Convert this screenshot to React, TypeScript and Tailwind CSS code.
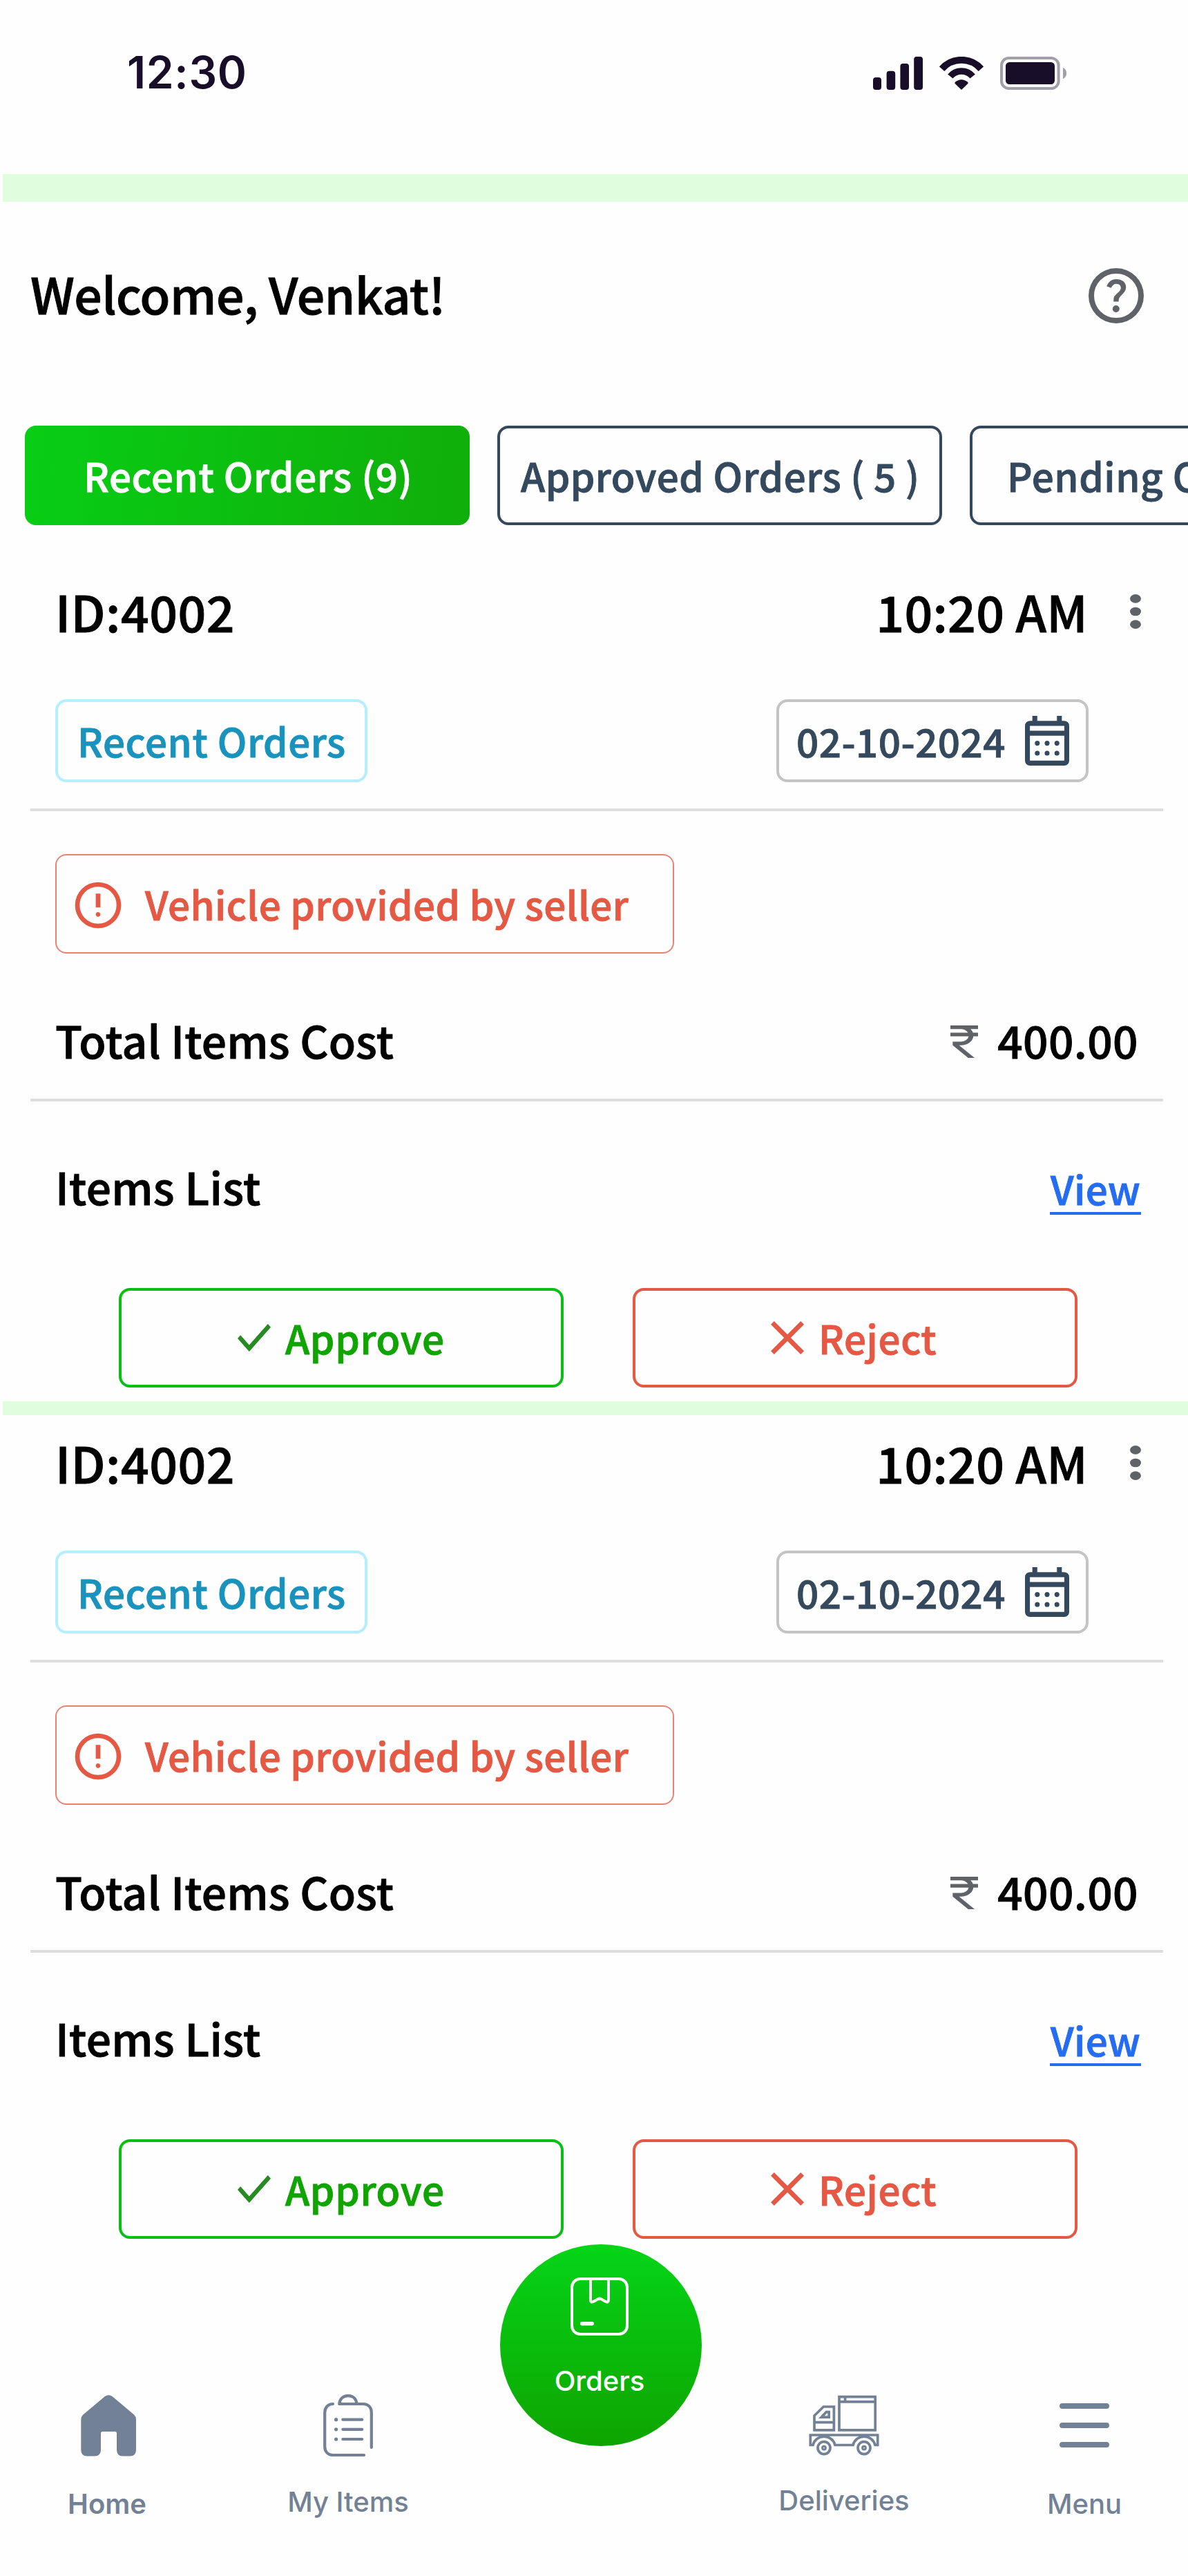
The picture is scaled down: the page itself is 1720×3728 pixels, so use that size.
import type { ReactNode } from "react";

function SignalIcon() {
  return (
    <svg width="72" height="48" viewBox="0 0 72 48" fill="#180e29">
      <rect x="0" y="30" width="12" height="18" rx="4" />
      <rect x="19.6" y="20.8" width="12.6" height="27.2" rx="4" />
      <rect x="39.4" y="10" width="12.6" height="38" rx="4" />
      <rect x="59.2" y="0" width="12.8" height="48" rx="4" />
    </svg>
  );
}

function WifiIcon() {
  return (
    <svg width="64" height="48" viewBox="0 0 64 48" fill="none" stroke="#180e29">
      <path d="M3.6 17.7A37.6 37.6 0 0 1 60.4 17.7" strokeWidth="9.8" />
      <path d="M15.8 28.5A21.3 21.3 0 0 1 48.2 28.5" strokeWidth="9.6" />
      <path
        d="M32 48 22.9 39.2Q21.6 38 22.9 36.8 27 33.2 32 33.2T41.1 36.8Q42.4 38 41.1 39.2Z"
        fill="#180e29"
        stroke="none"
      />
    </svg>
  );
}

function BatteryIcon() {
  return (
    <svg width="96" height="48" viewBox="0 0 96 48" fill="none">
      <rect x="2" y="2" width="82.6" height="44" rx="10.5" stroke="#a29faa" strokeWidth="4" />
      <rect x="8" y="8" width="71" height="32" rx="5.5" fill="#180e29" />
      <path d="M91 15.8q5.2 3.2 5.2 8.2t-5.2 8.2z" fill="#a29faa" />
    </svg>
  );
}

function HelpIcon() {
  return (
    <svg width="96" height="96" viewBox="0 -960 960 960" fill="#5f6368">
      <path d="M478-240q21 0 35.5-14.5T528-290q0-21-14.5-35.5T478-340q-21 0-35.5 14.5T428-290q0 21 14.5 35.5T478-240Zm-36-154h74q0-33 7.5-52t42.5-52q26-26 41-49.5t15-56.5q0-56-41-86t-97-30q-57 0-92.5 30T342-618l66 26q5-18 22.5-39t53.5-21q32 0 48 17.5t16 38.5q0 20-12 37.5T506-526q-44 39-54 59t-10 73Zm38 314q-83 0-156-31.5T197-197q-54-54-85.5-127T80-480q0-83 31.5-156T197-763q54-54 127-85.5T480-880q83 0 156 31.5T763-763q54 54 85.5 127T880-480q0 83-31.5 156T763-197q-54 54-127 85.5T480-80Zm0-80q134 0 227-93t93-227q0-134-93-227t-227-93q-134 0-227 93t-93 227q0 134 93 227t227 93Z" />
    </svg>
  );
}

function MoreIcon() {
  return (
    <svg width="16" height="50" viewBox="0 0 16 50" fill="#5f6368">
      <ellipse cx="8" cy="6.4" rx="8" ry="6.3" />
      <ellipse cx="8" cy="25" rx="8" ry="6.3" />
      <ellipse cx="8" cy="43.6" rx="8" ry="6.3" />
    </svg>
  );
}

function CalendarIcon() {
  return (
    <svg width="64" height="72" viewBox="120 -880 720 800" preserveAspectRatio="none" fill="#34495e">
      <path d="M200-80q-33 0-56.5-23.5T120-160v-560q0-33 23.5-56.5T200-800h40v-80h80v80h320v-80h80v80h40q33 0 56.5 23.5T840-720v560q0 33-23.5 56.5T760-80H200Zm0-80h560v-400H200v400Zm0-480h560v-80H200v80Z" />
      <circle cx="320" cy="-440" r="40" />
      <circle cx="480" cy="-440" r="40" />
      <circle cx="640" cy="-440" r="40" />
      <circle cx="320" cy="-280" r="40" />
      <circle cx="480" cy="-280" r="40" />
      <circle cx="640" cy="-280" r="40" />
    </svg>
  );
}

function AlertIcon() {
  return (
    <svg width="80" height="80" viewBox="0 -960 960 960" fill="#e55844" className="shrink-0">
      <path d="M480-280q17 0 28.5-11.5T520-320q0-17-11.5-28.5T480-360q-17 0-28.5 11.5T440-320q0 17 11.5 28.5T480-280Zm-40-160h80v-240h-80v240Zm40 360q-83 0-156-31.5T197-197q-54-54-85.5-127T80-480q0-83 31.5-156T197-763q54-54 127-85.5T480-880q83 0 156 31.5T763-763q54 54 85.5 127T880-480q0 83-31.5 156T763-197q-54 54-127 85.5T480-80Zm0-80q134 0 227-93t93-227q0-134-93-227t-227-93q-134 0-227 93t-93 227q0 134 93 227t227 93Z" />
    </svg>
  );
}

function RupeeIcon() {
  return (
    <svg width="40" height="47" viewBox="240 -840 480 720" preserveAspectRatio="none" fill="#5f6368">
      <path d="M549-120 280-400v-80h140q53 0 91.5-34.5T558-600H240v-80h306q-17-35-50.5-57.5T420-760H240v-80h480v80H590q14 17 25 37t17 43h88v80h-81q-8 85-70 142.5T420-400h-29l269 280H549Z" />
    </svg>
  );
}

function CheckIcon() {
  return (
    <svg width="48" height="40" viewBox="154 -721 652 481" preserveAspectRatio="none" fill="#268b22">
      <path d="M382-240 154-468l57-57 171 171 367-367 57 57-424 424Z" />
    </svg>
  );
}

function CrossIcon() {
  return (
    <svg width="48" height="48" viewBox="200 -760 560 560" fill="#e55844">
      <path d="m256-200-56-56 224-224-224-224 56-56 224 224 224-224 56 56-224 224 224 224-56 56-224-224-224 224Z" />
    </svg>
  );
}

function HomeIcon() {
  return (
    <svg width="80" height="89" viewBox="0 0 80 89" fill="#728195">
      <path d="M34.6 2.2Q40.2-1.8 45.8 2.2L77 28.6Q80 31.4 80 35.5V79.5Q80 88.5 71.5 88.5H60.5Q52 88.5 52 79.5V55.5Q52 53 49.5 53H31.5Q29 53 29 55.5V79.5Q29 88.5 20 88.5H9Q.3 88.5.3 79.5V35.5Q.3 31.4 3.4 28.6Z" />
    </svg>
  );
}

function ClipboardIcon() {
  return (
    <svg width="72" height="90" viewBox="0 0 72 90" fill="none" stroke="#728195" strokeWidth="4.2" strokeLinecap="round" strokeLinejoin="round">
      <path d="M14 14C7 14 2.2 19 2.2 26.5V76C2.2 83 7 88 13.5 88H59" />
      <path d="M23.4 14H58C65 14 69.8 19 69.8 26V77" />
      <path d="M23.4 14C23.4 7 28.5 2.1 36 2.1S48.4 7 48.4 14" />
      <path d="M28.3 36.7H56.2M28.3 50.8H56.2M28.3 65H56.2" />
      <g fill="#728195" stroke="none">
        <circle cx="18.6" cy="36.7" r="2.6" />
        <circle cx="18.6" cy="50.8" r="2.6" />
        <circle cx="18.6" cy="65" r="2.6" />
      </g>
    </svg>
  );
}

function PackageIcon() {
  return (
    <svg width="84" height="84" viewBox="0 0 84 84" fill="none" stroke="#fff" strokeWidth="4" strokeLinecap="round" strokeLinejoin="round">
      <rect x="2" y="2" width="80" height="80" rx="12" />
      <path d="M29 3V32.5Q29 36.8 33 35L39.3 31.4Q42 29.8 44.7 31.4L51 35Q55 36.8 55 32.5V3" />
      <path d="M16.6 66.8H31.2" strokeWidth="5.4" />
    </svg>
  );
}

function TruckIcon() {
  return (
    <svg width="102" height="88" viewBox="0 0 102 88" fill="none" stroke="#728195" strokeWidth="3.7">
      <path d="M44 2.7H96.2V50.8H44ZM44 9.9H96.2M52.6 2.7V9.9" />
      <path d="M8 50.8V30L21.3 17H36.4V50.8ZM8 39.6H36.4" />
      <path d="M18.2 32.2 25.4 24.7H29.2V32.2Z" />
      <path d="M2.3 72.5V58H99.7V72.5H96A16.5 16.5 0 0 0 64 72.5H38A16.5 16.5 0 0 0 6 72.5Z" />
      <circle cx="22" cy="76.6" r="9" />
      <circle cx="80" cy="76.6" r="9" />
      <circle cx="22" cy="76.6" r="2.4" strokeWidth="3" />
      <circle cx="80" cy="76.6" r="2.4" strokeWidth="3" />
    </svg>
  );
}

function MenuIcon() {
  return (
    <svg width="72" height="64" viewBox="0 0 72 64" stroke="#728195" strokeWidth="8" strokeLinecap="round">
      <path d="M4 4H68M4 32H68M4 60H68" />
    </svg>
  );
}

function Divider() {
  return <div className="ml-[44px] mr-[36px] h-1 bg-[#dedede]" />;
}

function OrderCard() {
  return (
    <section className="flex flex-col pt-4">
      <div className="flex items-start pl-20 pr-[68px] text-[71.5px] leading-[105px] text-black">
        <span className="tracking-[0.5px]">ID:4002</span>
        <span className="ml-auto tracking-[0.3px]">10:20 AM</span>
        <span className="ml-[61px] mt-7">
          <MoreIcon />
        </span>
      </div>

      <div className="mt-[75px] flex justify-between pl-20 pr-36 text-[56.5px] leading-[82px]">
        <div className="h-[120px] w-[452px] rounded-2xl border-4 border-[#b5eeff] pl-7 pt-[14px] tracking-[0.6px] text-[#1992be]">
          Recent Orders
        </div>
        <div className="flex h-[120px] w-[452px] items-start justify-between rounded-2xl border-4 border-[#c4c4c4] pl-[25px] pr-6 text-[#34495e]">
          <span className="mt-[14px] tracking-[0.5px]">02-10-2024</span>
          <span className="mt-5">
            <CalendarIcon />
          </span>
        </div>
      </div>

      <div className="mt-[38px]">
        <Divider />
      </div>

      <div className="ml-20 mt-[62px] flex h-36 w-[896px] items-start rounded-2xl border-2 border-[#eb8172] pl-5 text-[56.5px] leading-[82px] tracking-[0.45px] text-[#e55844]">
        <span className="mt-8">
          <AlertIcon />
        </span>
        <span className="ml-7 mt-7 whitespace-nowrap">Vehicle provided by seller</span>
      </div>

      <div className="mt-[78px] flex items-start pl-20 pr-[72px] text-[64px] leading-[92px] text-black">
        <span className="tracking-[0.2px]">Total Items Cost</span>
        <span className="ml-auto mt-[26px]">
          <RupeeIcon />
        </span>
        <span className="ml-7 tracking-[0.4px]">400.00</span>
      </div>

      <div className="mt-10">
        <Divider />
      </div>

      <div className="mt-[76px] flex items-start justify-between pl-20 pr-[68px] text-[64px] leading-[92px] text-black">
        <span className="tracking-[0.3px]">Items List</span>
        <a className="mt-[14px] w-[132px] border-b-4 border-[#256df0] pl-px text-[56.5px] leading-[70px] tracking-[0.4px] text-[#256df0]">View</a>
      </div>

      <div className="mt-[102px] flex gap-[100px] pl-[172px] text-[56.5px] leading-[82px]">
        <button className="flex h-36 w-[644px] items-start rounded-2xl border-4 border-[#08c012] pl-[168px] tracking-[0.7px] text-[#0fa400]">
          <span className="mt-12">
            <CheckIcon />
          </span>
          <span className="ml-[21px] mt-[26px]">Approve</span>
        </button>
        <button className="flex h-36 w-[644px] items-start rounded-2xl border-4 border-[#e55844] pl-[196px] tracking-[0.6px] text-[#e55844]">
          <span className="mt-11">
            <CrossIcon />
          </span>
          <span className="ml-[21px] mt-[26px]">Reject</span>
        </button>
      </div>
    </section>
  );
}

function NavItem({ className, icon, label }: { className: string; icon: ReactNode; label: ReactNode }) {
  return (
    <div className={`flex flex-col items-center ${className}`}>
      {icon}
      {label}
    </div>
  );
}

export default function App() {
  return (
    <div className="flex h-[3728px] w-[1720px] flex-col overflow-hidden bg-[#fefefe] font-['Noto_Sans_CJK_JP',sans-serif] font-medium [-webkit-text-stroke-width:0.9px] [&_svg]:block">
      <header className="flex h-[252px] shrink-0 items-start justify-between pl-[184px] pr-44">
        <span className="mt-[66px] font-['Inter',sans-serif] text-[64px] font-semibold leading-[77px] tracking-[0.7px] text-[#180e29] [-webkit-text-stroke-width:0]">
          12:30
        </span>
        <div className="mt-[82px] flex gap-6">
          <SignalIcon />
          <WifiIcon />
          <BatteryIcon />
        </div>
      </header>
      <div className="ml-1 h-10 shrink-0 bg-[#e0fdde]" />

      <div className="flex h-[324px] shrink-0 items-start justify-between pl-[44px] pr-14">
        <h1 className="mt-20 text-[71.5px] leading-[105px] tracking-[-0.55px] text-black">Welcome, Venkat!</h1>
        <div className="mt-[88px]">
          <HelpIcon />
        </div>
      </div>

      <nav className="flex shrink-0 gap-10 overflow-hidden pl-9 text-[56.5px] leading-[82px] text-[#34495e]">
        <div className="h-36 w-[644px] shrink-0 whitespace-nowrap rounded-2xl bg-linear-[96deg,#08ce15,#10ae0a] pl-[85px] pt-[30px] tracking-[0.6px] text-white">
          Recent Orders (9)
        </div>
        <div className="h-36 w-[644px] shrink-0 whitespace-nowrap rounded-2xl border-4 border-[#34495e] pl-[30px] pt-[26px] tracking-[0.5px]">
          Approved Orders ( 5 )
        </div>
        <div className="h-36 w-[644px] shrink-0 whitespace-nowrap rounded-2xl border-4 border-[#34495e] pl-[50px] pt-[26px] tracking-[0.6px]">
          Pending Orders ( 2 )
        </div>
      </nav>

      <main className="mt-14 shrink-0">
        <OrderCard />
        <div className="ml-1 mt-5 h-5 bg-[#e0fdde]" />
        <OrderCard />
      </main>

      <footer className="flex shrink-0 items-start font-['Inter',sans-serif] text-[40px] leading-[49px] text-[#728195] [-webkit-text-stroke-width:0]">
        <NavItem
          className="w-[314px] pt-[226px]"
          icon={<HomeIcon />}
          label={<span className="mt-11 pr-1 font-semibold">Home</span>}
        />
        <NavItem
          className="w-[380px] pt-[225px]"
          icon={<ClipboardIcon />}
          label={<span className="mt-[41px]">My Items</span>}
        />
        <NavItem
          className="ml-[30px] mr-2 mt-2 size-[292px] rounded-full bg-linear-[180deg,#04d517,#0fa400] pr-1 pt-12 text-white"
          icon={<PackageIcon />}
          label={<span className="mt-[41px]">Orders</span>}
        />
        <NavItem
          className="w-[396px] pt-[226px]"
          icon={<TruckIcon />}
          label={<span className="mt-10">Deliveries</span>}
        />
        <NavItem
          className="w-[300px] pt-[238px]"
          icon={<MenuIcon />}
          label={<span className="mt-[57px]">Menu</span>}
        />
      </footer>
    </div>
  );
}
